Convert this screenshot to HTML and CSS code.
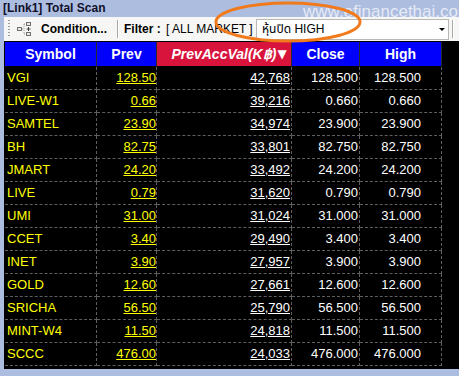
FILE: index.html
```html
<!DOCTYPE html>
<html>
<head>
<meta charset="utf-8">
<link rel="stylesheet" href="styles.css">
</head>
<body>
<div class="app">
  <div class="title">[Link1] Total Scan</div>
  <div class="toolbar">
    <span class="grip"></span>
    <svg class="ico" width="16" height="16" viewBox="0 0 16 16">
      <rect x="1.5" y="6.5" width="4" height="3" fill="#e8e8e8" stroke="#707070"/>
      <path d="M6 8h2M8 3v10M8 3h2M8 13h2" stroke="#909090" stroke-dasharray="1 1" fill="none"/>
      <rect x="10.5" y="1.5" width="4" height="3" fill="#e8e8e8" stroke="#707070"/>
      <rect x="10.5" y="11.5" width="4" height="3" fill="#e8e8e8" stroke="#707070"/>
      <path d="M12.5 6v4M10.5 8h4" stroke="#404040" fill="none"/>
    </svg>
    <span class="cond">Condition...</span>
    <span class="sep"></span>
    <span class="flabel">Filter :</span>
    <span class="market">[ ALL MARKET ]</span>
    <div class="combo"><span class="combo-text">หุ้นปิด HIGH</span><span class="arrow"></span></div>
    <span class="sep sep-r"></span>
  </div>
  <div class="grid">
    <div class="row head">
      <div class="hc blue">Symbol</div>
      <div class="hc blue">Prev</div>
      <div class="hc red"><span class="it">PrevAccVal(K฿)</span><span class="tri">▼</span></div>
      <div class="hc blue">Close</div>
      <div class="hc blue">High</div>
    </div>
    <div class="row"><div class="c sym">VGI</div><div class="c prev"><u>128.50</u></div><div class="c acc"><u>42,768</u></div><div class="c num">128.500</div><div class="c high">128.500</div></div>
    <div class="row"><div class="c sym">LIVE-W1</div><div class="c prev"><u>0.66</u></div><div class="c acc"><u>39,216</u></div><div class="c num">0.660</div><div class="c high">0.660</div></div>
    <div class="row"><div class="c sym">SAMTEL</div><div class="c prev"><u>23.90</u></div><div class="c acc"><u>34,974</u></div><div class="c num">23.900</div><div class="c high">23.900</div></div>
    <div class="row"><div class="c sym">BH</div><div class="c prev"><u>82.75</u></div><div class="c acc"><u>33,801</u></div><div class="c num">82.750</div><div class="c high">82.750</div></div>
    <div class="row"><div class="c sym">JMART</div><div class="c prev"><u>24.20</u></div><div class="c acc"><u>33,492</u></div><div class="c num">24.200</div><div class="c high">24.200</div></div>
    <div class="row"><div class="c sym">LIVE</div><div class="c prev"><u>0.79</u></div><div class="c acc"><u>31,620</u></div><div class="c num">0.790</div><div class="c high">0.790</div></div>
    <div class="row"><div class="c sym">UMI</div><div class="c prev"><u>31.00</u></div><div class="c acc"><u>31,024</u></div><div class="c num">31.000</div><div class="c high">31.000</div></div>
    <div class="row"><div class="c sym">CCET</div><div class="c prev"><u>3.40</u></div><div class="c acc"><u>29,490</u></div><div class="c num">3.400</div><div class="c high">3.400</div></div>
    <div class="row"><div class="c sym">INET</div><div class="c prev"><u>3.90</u></div><div class="c acc"><u>27,957</u></div><div class="c num">3.900</div><div class="c high">3.900</div></div>
    <div class="row"><div class="c sym">GOLD</div><div class="c prev"><u>12.60</u></div><div class="c acc"><u>27,661</u></div><div class="c num">12.600</div><div class="c high">12.600</div></div>
    <div class="row"><div class="c sym">SRICHA</div><div class="c prev"><u>56.50</u></div><div class="c acc"><u>25,790</u></div><div class="c num">56.500</div><div class="c high">56.500</div></div>
    <div class="row"><div class="c sym">MINT-W4</div><div class="c prev"><u>11.50</u></div><div class="c acc"><u>24,818</u></div><div class="c num">11.500</div><div class="c high">11.500</div></div>
    <div class="row"><div class="c sym">SCCC</div><div class="c prev"><u>476.00</u></div><div class="c acc"><u>24,033</u></div><div class="c num">476.000</div><div class="c high">476.000</div></div>
  </div>
  <div class="watermark">www.efinancethai.com</div>
  <svg class="annot" width="160" height="46" viewBox="0 0 160 46">
    <ellipse cx="78" cy="22" rx="72" ry="19" fill="none" stroke="#f07a1c" stroke-width="3"/>
  </svg>
</div>
</body>
</html>
```
FILE: styles.css
```css
html, body {
  margin: 0;
  padding: 0;
}
body {
  background: #adbde0;
  font-family: "Liberation Sans", Arial, sans-serif;
  overflow: hidden;
}
.app {
  position: relative;
  width: 459px;
  height: 376px;
  background: #adbde0;
  overflow: hidden;
}
.title {
  height: 17px;
  line-height: 17px;
  padding-left: 3px;
  font-weight: bold;
  font-size: 12px;
  color: #10102a;
}
.toolbar {
  margin-left: 4px;
  height: 24px;
  background: #f6f6f4;
  display: flex;
  align-items: center;
  font-size: 12px;
  color: #000;
}
.grip {
  margin-left: 4px;
  width: 2px;
  height: 18px;
  background: repeating-linear-gradient(to bottom, #9a9a9a 0 1px, transparent 1px 3px);
}
.ico {
  margin-left: 6px;
  flex: none;
}
.cond {
  margin-left: 9px;
  width: 70px;
  font-weight: bold;
}
.sep {
  margin-left: 6px;
  width: 1px;
  height: 18px;
  background: #a8a8a8;
  border-right: 1px solid #fff;
}
.flabel {
  margin-left: 5px;
  width: 42px;
  font-weight: bold;
}
.market {
  width: 90px;
  white-space: nowrap;
}
.combo {
  width: 193px;
  height: 21px;
  box-sizing: border-box;
  background: #fff;
  border: 1px solid #b8b8b8;
  display: flex;
  align-items: center;
  justify-content: space-between;
  padding: 0 3px 0 5px;
}
.combo-text {
  font-family: "Liberation Sans", Tahoma, "Noto Sans Thai", "DejaVu Sans", sans-serif;
  font-size: 12px;
}
.arrow {
  width: 0;
  height: 0;
  border-left: 3px solid transparent;
  border-right: 3px solid transparent;
  border-top: 3px solid #000;
}
.sep-r {
  margin-left: 3px;
}
.grid {
  margin-left: 4px;
  height: 328px;
  box-sizing: border-box;
  padding: 1px 0 0 1px;
  background: #000;
}
.row {
  display: grid;
  grid-template-columns: 92px 60px 135px 68px 82px;
  height: 23px;
}
.row.head {
  height: 25px;
}
.hc {
  box-sizing: border-box;
  border-right: 1px solid #2a2a2a;
  border-bottom: 1px solid #000;
  color: #fff;
  font-weight: bold;
  font-size: 14px;
  display: flex;
  align-items: center;
  justify-content: center;
}
.blue {
  background: #0000fc;
}
.red {
  background: #d8143c;
  padding-left: 10px;
}
.it {
  font-style: italic;
}
.tri {
  font-size: 12px;
  font-family: "DejaVu Sans", sans-serif;
  margin-left: 1px;
}
.c {
  box-sizing: border-box;
  border-right: 1px dashed #5e5e5e;
  border-bottom: 1px dashed #5e5e5e;
  font-size: 13px;
  line-height: 22px;
  color: #fff;
  white-space: nowrap;
}
.c u {
  text-decoration: underline;
}
.sym {
  color: #ffff00;
  padding-left: 2px;
}
.prev {
  color: #ffff00;
  text-align: right;
  padding-right: 0;
}
.acc {
  text-align: right;
  padding-right: 1px;
}
.num {
  text-align: right;
  padding-right: 1px;
}
.high {
  text-align: right;
  padding-right: 20px;
}
.watermark {
  position: absolute;
  left: 303px;
  top: 3px;
  font-size: 17px;
  line-height: 17px;
  color: rgba(255, 255, 255, 0.7);
  white-space: nowrap;
  pointer-events: none;
}
.annot {
  position: absolute;
  left: 210px;
  top: 0;
  pointer-events: none;
}
```
